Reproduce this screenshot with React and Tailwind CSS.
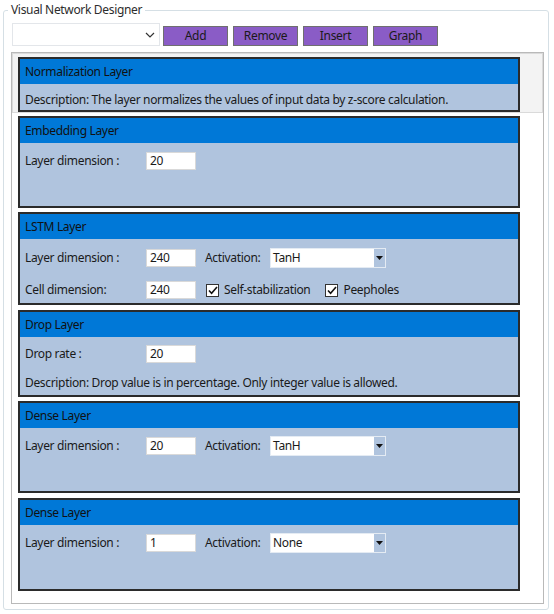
import { useState } from 'react'

const font = { fontFamily: '"Noto Sans", "Open Sans", sans-serif' }

function TextBox({ value }) {
  return (
    <div className="w-[50px] h-[18px] bg-white border border-[#d9d9d9] flex items-center px-[3px] text-[12px] text-[#1a1a1a]">
      {value}
    </div>
  )
}

function Select({ value }) {
  return (
    <div className="w-[116px] h-[20px] bg-white border border-[#e4ebf3] flex items-stretch">
      <div className="flex-1 flex items-center px-[2px] text-[12px] text-[#1a1a1a]">{value}</div>
      <div className="w-[11px] bg-[#b0c4de] flex items-center justify-center">
        <svg width="7" height="4" viewBox="0 0 7 4"><path d="M0 0h7L3.5 4z" fill="#111" /></svg>
      </div>
    </div>
  )
}

function Check({ label }) {
  return (
    <div className="flex items-center gap-[5px]">
      <div className="w-[13px] h-[13px] bg-white border border-[#333] flex items-center justify-center">
        <svg width="10" height="9" viewBox="0 0 10 9"><path d="M1 4.5l2.6 2.8L9 1" fill="none" stroke="#111" strokeWidth="1.6" /></svg>
      </div>
      <span>{label}</span>
    </div>
  )
}

function Row({ children, className = '' }) {
  return <div className={`h-[20px] flex items-center ${className}`}>{children}</div>
}

function Field({ label, value }) {
  return (
    <>
      <span className="w-[121px]">{label}</span>
      <TextBox value={value} />
    </>
  )
}

function Activation({ value }) {
  return (
    <>
      <span className="ml-[9px] w-[65px]">Activation:</span>
      <Select value={value} />
    </>
  )
}

function Panel({ title, className, children }) {
  return (
    <div className={`w-[502px] ${className} border-2 border-[#2b2b2b] bg-[#b0c4de] flex flex-col`}>
      <div className="h-[25px] bg-[#0078d7] flex items-center px-[5px] text-[#111]">{title}</div>
      <div className="px-[5px] flex flex-col">{children}</div>
    </div>
  )
}

export default function App() {
  const [layers] = useState([
    'Normalization Layer',
    'Embedding Layer',
    'LSTM Layer',
    'Drop Layer',
    'Dense Layer',
    'Dense Layer',
  ])

  return (
    <div className="w-[554px] h-[614px] bg-white text-[12px] tracking-[-0.33px] text-[#1a1a1a]" style={font}>
      <div className="pt-[10px] pl-[3px]">
        <div className="relative w-[546px] h-[600px] border border-[#d5dfe5] rounded-[3px] pt-[12px] pl-[8px]">
          {/* group title */}
          <div className="absolute left-[4px] top-[-9px] bg-white px-[3px] text-[12px] text-[#2d2d2d] leading-[16px]">
            Visual Network Designer
          </div>

          {/* toolbar */}
          <div className="flex items-center h-[23px]">
            <div className="w-[148px] h-[23px] bg-white border border-[#e3e6ea] flex items-center justify-end pr-[4px]">
              <svg width="10" height="6" viewBox="0 0 10 6"><path d="M1 1l4 4 4-4" fill="none" stroke="#333" strokeWidth="1.2" /></svg>
            </div>
            <div className="flex gap-[5px] ml-[3px] mt-[2px]">
              {['Add', 'Remove', 'Insert', 'Graph'].map(b => (
                <button key={b} className="w-[65px] h-[20px] bg-[#8a5cc6] border border-[#6f6f6f] text-[12px] text-[#1a1a1a] flex items-center justify-center">
                  {b}
                </button>
              ))}
            </div>
          </div>

          {/* layer list */}
          <div className="mt-[6px] ml-[-1px] w-[533px] h-[552px] border border-[#b9b9b9] flex flex-col gap-[3px]">
            <div className="border border-[#dadada] bg-[#f3f3f3] pt-[3px] pl-[5px]">
              <Panel title={layers[0]} className="h-[55px]">
                <Row className="mt-[6px]">Description: The layer normalizes the values of input data by z-score calculation.</Row>
              </Panel>
            </div>

            <div className="pl-[6px] flex flex-col gap-[4px]">
              <Panel title={layers[1]} className="h-[92px]">
                <Row className="mt-[8px]"><Field label="Layer dimension :" value="20" /></Row>
              </Panel>

              <Panel title={layers[2]} className="h-[93px]">
                <Row className="mt-[9px]">
                  <Field label="Layer dimension :" value="240" />
                  <Activation value="TanH" />
                </Row>
                <Row className="mt-[12px]">
                  <Field label="Cell dimension:" value="240" />
                  <div className="ml-[10px]"><Check label="Self-stabilization" /></div>
                  <div className="ml-[15px]"><Check label="Peepholes" /></div>
                </Row>
              </Panel>

              <Panel title={layers[3]} className="h-[87px] mt-[1px]">
                <Row className="mt-[7px]"><Field label="Drop rate :" value="20" /></Row>
                <Row className="mt-[9px]">Description: Drop value is in percentage. Only integer value is allowed.</Row>
              </Panel>

              <Panel title={layers[4]} className="h-[92px]">
                <Row className="mt-[8px]">
                  <Field label="Layer dimension :" value="20" />
                  <Activation value="TanH" />
                </Row>
              </Panel>

              <Panel title={layers[5]} className="h-[93px] mt-[1px]">
                <Row className="mt-[8px]">
                  <Field label="Layer dimension :" value="1" />
                  <Activation value="None" />
                </Row>
              </Panel>
            </div>
          </div>
        </div>
      </div>
    </div>
  )
}
